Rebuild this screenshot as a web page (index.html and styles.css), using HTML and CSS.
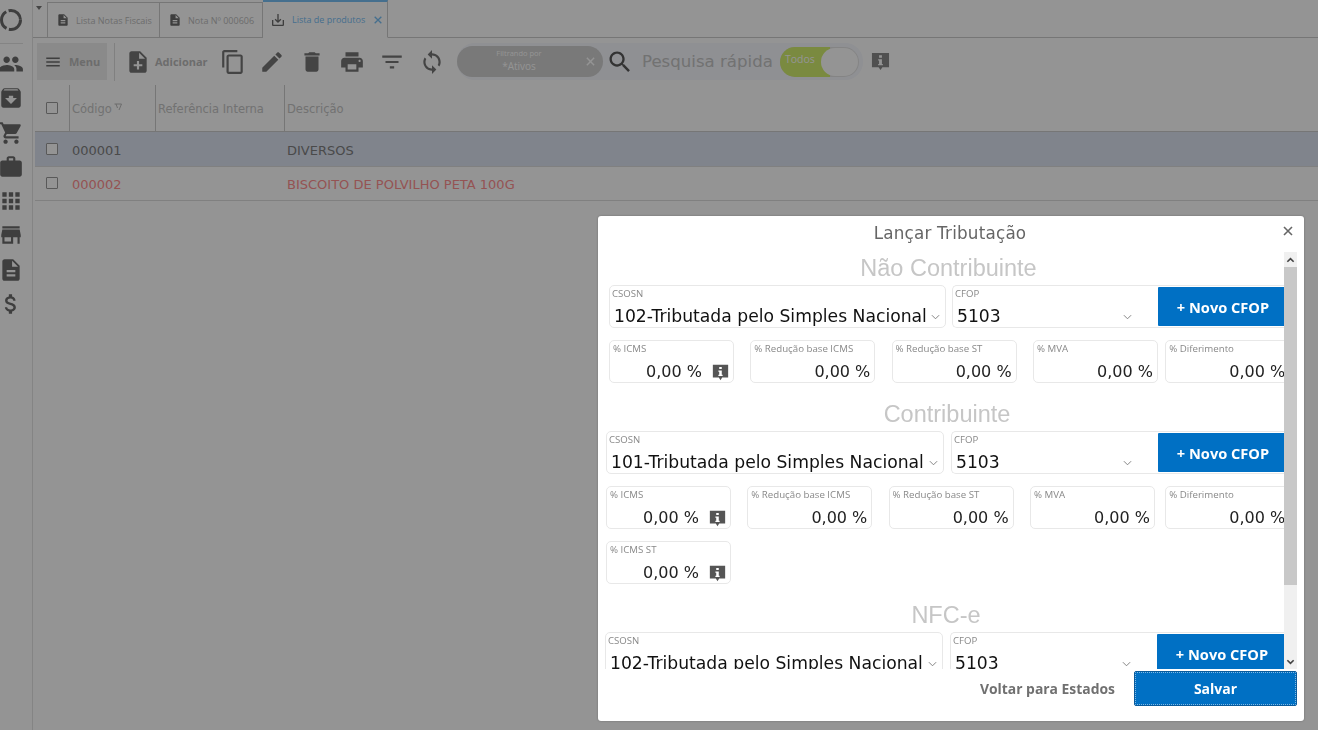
FILE: index.html
```html
<!DOCTYPE html>
<html lang="pt-BR">
<head>
    <meta charset="UTF-8">
    <title>Lista de produtos</title>
    <link rel="stylesheet" href="styles.css">
</head>
<body>
    <svg class="defs" width="0" height="0">
        <symbol id="i-people" viewBox="0 0 24 24"><path d="M16 11c1.66 0 2.99-1.34 2.99-3S17.66 5 16 5c-1.66 0-3 1.34-3 3s1.34 3 3 3zm-8 0c1.66 0 2.99-1.34 2.99-3S9.66 5 8 5C6.34 5 5 6.34 5 8s1.34 3 3 3zm0 2c-2.33 0-7 1.17-7 3.5V19h14v-2.5c0-2.33-4.67-3.5-7-3.5zm8 0c-.29 0-.62.02-.97.05 1.16.84 1.97 1.97 1.97 3.45V19h6v-2.5c0-2.33-4.67-3.5-7-3.5z"/></symbol>
        <symbol id="i-archive" viewBox="0 0 24 24"><path d="M20.54 5.23l-1.39-1.68C18.88 3.21 18.47 3 18 3H6c-.47 0-.88.21-1.16.55L3.46 5.23C3.17 5.57 3 6.02 3 6.5V19c0 1.1.9 2 2 2h14c1.1 0 2-.9 2-2V6.5c0-.48-.17-.93-.46-1.27zM12 17.5L6.5 12H10v-2h4v2h3.5L12 17.5zM5.12 5l.81-1h12l.94 1H5.12z"/></symbol>
        <symbol id="i-cart" viewBox="0 0 24 24"><path d="M7 18c-1.1 0-1.99.9-1.99 2S5.9 22 7 22s2-.9 2-2-.9-2-2-2zM1 2v2h2l3.6 7.59-1.35 2.45c-.16.28-.25.61-.25.96 0 1.1.9 2 2 2h12v-2H7.42c-.14 0-.25-.11-.25-.25l.03-.12.9-1.63h7.45c.75 0 1.41-.41 1.75-1.03l3.58-6.49c.08-.14.12-.31.12-.48 0-.55-.45-1-1-1H5.21l-.94-2H1zm16 16c-1.1 0-1.99.9-1.99 2s.89 2 1.99 2 2-.9 2-2-.9-2-2-2z"/></symbol>
        <symbol id="i-work" viewBox="0 0 24 24"><path d="M20 6h-4V4c0-1.11-.89-2-2-2h-4c-1.11 0-2 .89-2 2v2H4c-1.11 0-1.99.89-1.99 2L2 19c0 1.11.89 2 2 2h16c1.11 0 2-.89 2-2V8c0-1.11-.89-2-2-2zm-6 0h-4V4h4v2z"/></symbol>
        <symbol id="i-apps" viewBox="0 0 24 24"><path d="M4 8h4V4H4v4zm6 12h4v-4h-4v4zm-6 0h4v-4H4v4zm0-6h4v-4H4v4zm6 0h4v-4h-4v4zm6-10v4h4V4h-4zm-6 4h4V4h-4v4zm6 6h4v-4h-4v4zm0 6h4v-4h-4v4z"/></symbol>
        <symbol id="i-store" viewBox="0 0 24 24"><path d="M20 4H4v2h16V4zm1 10v-2l-1-5H4l-1 5v2h1v6h10v-6h4v6h2v-6h1zm-9 4H6v-4h6v4z"/></symbol>
        <symbol id="i-doc" viewBox="0 0 24 24"><path d="M14 2H6c-1.1 0-1.99.9-1.99 2L4 20c0 1.1.89 2 1.99 2H18c1.1 0 2-.9 2-2V8l-6-6zm2 16H8v-2h8v2zm0-4H8v-2h8v2zm-3-5V3.5L18.5 9H13z"/></symbol>
        <symbol id="i-money" viewBox="0 0 24 24"><path d="M11.8 10.9c-2.27-.59-3-1.2-3-2.15 0-1.09 1.01-1.85 2.7-1.85 1.78 0 2.44.85 2.5 2.1h2.21c-.07-1.72-1.12-3.3-3.21-3.81V3h-3v2.16c-1.94.42-3.5 1.68-3.5 3.61 0 2.31 1.91 3.46 4.7 4.13 2.5.6 3 1.48 3 2.41 0 .69-.49 1.79-2.7 1.79-2.06 0-2.87-.92-2.98-2.1h-2.2c.12 2.19 1.76 3.42 3.68 3.83V21h3v-2.15c1.95-.37 3.5-1.5 3.5-3.55 0-2.84-2.43-3.81-4.7-4.4z"/></symbol>
        <symbol id="i-download" viewBox="0 0 24 24"><path d="M19 12v7H5v-7H3v7c0 1.1.9 2 2 2h14c1.1 0 2-.9 2-2v-7h-2zm-6 .67l2.59-2.58L17 11.5l-5 5-5-5 1.41-1.41L11 12.67V3h2z"/></symbol>
        <symbol id="i-add" viewBox="0 0 24 24"><path d="M14 2H6c-1.1 0-1.99.9-1.99 2L4 20c0 1.1.89 2 1.99 2H18c1.1 0 2-.9 2-2V8l-6-6zm2 14h-3v3h-2v-3H8v-2h3v-3h2v3h3v2zm-3-7V3.5L18.5 9H13z"/></symbol>
        <symbol id="i-copy" viewBox="0 0 24 24"><path d="M16 1H4c-1.1 0-2 .9-2 2v14h2V3h12V1zm3 4H8c-1.1 0-2 .9-2 2v14c0 1.1.9 2 2 2h11c1.1 0 2-.9 2-2V7c0-1.1-.9-2-2-2zm0 16H8V7h11v14z"/></symbol>
        <symbol id="i-edit" viewBox="0 0 24 24"><path d="M3 17.25V21h3.75L17.81 9.94l-3.75-3.75L3 17.25zM20.71 7.04c.39-.39.39-1.02 0-1.41l-2.34-2.34c-.39-.39-1.02-.39-1.41 0l-1.83 1.83 3.75 3.75 1.83-1.83z"/></symbol>
        <symbol id="i-delete" viewBox="0 0 24 24"><path d="M6 19c0 1.1.9 2 2 2h8c1.1 0 2-.9 2-2V7H6v12zM19 4h-3.5l-1-1h-5l-1 1H5v2h14V4z"/></symbol>
        <symbol id="i-print" viewBox="0 0 24 24"><path d="M19 8H5c-1.66 0-3 1.34-3 3v6h4v4h12v-4h4v-6c0-1.66-1.34-3-3-3zm-3 11H8v-5h8v5zm3-7c-.55 0-1-.45-1-1s.45-1 1-1 1 .45 1 1-.45 1-1 1zm-1-9H6v4h12V3z"/></symbol>
        <symbol id="i-filter" viewBox="0 0 24 24"><path d="M10 18h4v-2h-4v2zM3 6v2h18V6H3zm3 7h12v-2H6v2z"/></symbol>
        <symbol id="i-sync" viewBox="0 0 24 24"><path d="M12 4V1L8 5l4 4V6c3.31 0 6 2.69 6 6 0 1.01-.25 1.97-.7 2.8l1.46 1.46C19.54 15.03 20 13.57 20 12c0-4.42-3.58-8-8-8zm0 14c-3.31 0-6-2.69-6-6 0-1.01.25-1.97.7-2.8L5.24 7.74C4.46 8.97 4 10.43 4 12c0 4.42 3.58 8 8 8v3l4-4-4-4v3z"/></symbol>
        <symbol id="i-search" viewBox="0 0 24 24"><path d="M15.5 14h-.79l-.28-.27C15.41 12.59 16 11.11 16 9.5 16 5.91 13.09 3 9.5 3S3 5.91 3 9.5 5.91 16 9.5 16c1.61 0 3.09-.59 4.23-1.57l.27.28v.79l5 4.99L20.49 19l-4.99-5zm-6 0C7.01 14 5 11.99 5 9.5S7.01 5 9.5 5 14 7.01 14 9.5 11.99 14 9.5 14z"/></symbol>
        <symbol id="i-menu" viewBox="0 0 24 24"><path d="M3 18h18v-2H3v2zm0-5h18v-2H3v2zm0-7v2h18V6H3z"/></symbol>
        <symbol id="i-info" viewBox="0 0 20 20"><path fill-rule="evenodd" d="M1 1h18v15h-7l-2 3-2-3H1zM8.5 3.5v2.5h3V3.500zM7.500 7.500v1.500h1v3.500h-1V14h5v-1.500h-1V7.500z"/></symbol>
        <symbol id="i-close" viewBox="0 0 12 12"><path d="M2 2l8 8M10 2l-8 8" fill="none" stroke="currentColor" stroke-width="1.6"/></symbol>
        <symbol id="i-chevron" viewBox="0 0 10 6"><path d="M1 1l4 4 4-4" fill="none" stroke="currentColor" stroke-width="1"/></symbol>
        <symbol id="i-chevron-bold" viewBox="0 0 10 6"><path d="M1.500 1l3.500 3.500L8.500 1" fill="none" stroke="currentColor" stroke-width="1.800"/></symbol>
    </svg>

    <div class="app">
        <aside class="sidebar">
            <svg class="logo" viewBox="0 0 24 24"><circle cx="12" cy="12" r="9.500" fill="none" stroke="#6c6c6c" stroke-width="3" stroke-dasharray="17 2.500 20 2.500 17 1"/></svg>
            <div class="logo-line"></div>
            <svg class="side-icon"><use href="#i-people"/></svg>
            <svg class="side-icon"><use href="#i-archive"/></svg>
            <svg class="side-icon"><use href="#i-cart"/></svg>
            <svg class="side-icon"><use href="#i-work"/></svg>
            <svg class="side-icon"><use href="#i-apps"/></svg>
            <svg class="side-icon"><use href="#i-store"/></svg>
            <svg class="side-icon"><use href="#i-doc"/></svg>
            <svg class="side-icon"><use href="#i-money"/></svg>
        </aside>

        <main class="main">
            <div class="tabbar">
                <span class="tab-caret"></span>
                <div class="tab tab-one"><svg class="tab-icon"><use href="#i-doc"/></svg>Lista Notas Fiscais</div>
                <div class="tab tab-two"><svg class="tab-icon"><use href="#i-doc"/></svg>Nota Nº 000606</div>
                <div class="tab tab-active"><svg class="tab-icon"><use href="#i-download"/></svg>Lista de produtos<svg class="tab-close"><use href="#i-close"/></svg></div>
            </div>

            <div class="toolbar">
                <div class="menu-btn"><svg class="menu-icon"><use href="#i-menu"/></svg>Menu</div>
                <div class="tool-sep"></div>
                <div class="add-btn"><svg class="tool-icon"><use href="#i-add"/></svg>Adicionar</div>
                <svg class="tool-icon tool-first"><use href="#i-copy"/></svg>
                <svg class="tool-icon"><use href="#i-edit"/></svg>
                <svg class="tool-icon"><use href="#i-delete"/></svg>
                <svg class="tool-icon"><use href="#i-print"/></svg>
                <svg class="tool-icon"><use href="#i-filter"/></svg>
                <svg class="tool-icon"><use href="#i-sync"/></svg>
                <div class="search-group">
                    <div class="chip">
                        <span class="chip-small">Filtrando por</span>
                        <span class="chip-value">*Ativos</span>
                        <svg class="chip-close"><use href="#i-close"/></svg>
                    </div>
                    <svg class="search-icon"><use href="#i-search"/></svg>
                    <span class="search-text">Pesquisa rápida</span>
                    <div class="toggle"><span class="toggle-label">Todos</span><span class="toggle-knob"></span></div>
                </div>
                <svg class="toolbar-info"><use href="#i-info"/></svg>
            </div>

            <div class="grid-row grid-head">
                <div class="col-check"><span class="check"></span></div>
                <div class="col col-code">Código<svg class="sort-mark" viewBox="0 0 8 8"><path d="M.5 1h7L5 7M2 1l1.500 4" fill="none" stroke="#aaa" stroke-width=".8"/></svg></div>
                <div class="col col-ref">Referência Interna</div>
                <div class="col col-desc">Descrição</div>
            </div>
            <div class="grid-row grid-selected">
                <div class="col-check"><span class="check"></span></div>
                <div class="cell col-code">000001</div>
                <div class="cell col-ref"></div>
                <div class="cell col-desc">DIVERSOS</div>
            </div>
            <div class="grid-row grid-inactive">
                <div class="col-check"><span class="check"></span></div>
                <div class="cell col-code">000002</div>
                <div class="cell col-ref"></div>
                <div class="cell col-desc">BISCOITO DE POLVILHO PETA 100G</div>
            </div>
        </main>
    </div>

    <div class="overlay"></div>

    <div class="modal">
        <header class="modal-head">
            <span>Lançar Tributação</span>
            <svg class="modal-close"><use href="#i-close"/></svg>
        </header>

        <div class="modal-body">
            <div class="scroll">
                <div class="scroll-inner">
                    <section class="section section-a">
                        <h2>Não Contribuinte</h2>
                        <div class="select-row">
                            <div class="box csosn">
                                <label>CSOSN</label>
                                <div class="select-value">102-Tributada pelo Simples Nacional<svg class="chevron"><use href="#i-chevron"/></svg></div>
                            </div>
                            <div class="box cfop">
                                <div class="cfop-field">
                                    <label>CFOP</label>
                                    <div class="select-value">5103<svg class="chevron"><use href="#i-chevron"/></svg></div>
                                </div>
                                <button class="btn-cfop">+ Novo CFOP</button>
                            </div>
                        </div>
                        <div class="field-row">
                            <div class="box field"><label>% ICMS</label><div class="num has-info">0,00 %<svg class="info"><use href="#i-info"/></svg></div></div>
                            <div class="box field"><label>% Redução base ICMS</label><div class="num">0,00 %</div></div>
                            <div class="box field"><label>% Redução base ST</label><div class="num">0,00 %</div></div>
                            <div class="box field"><label>% MVA</label><div class="num">0,00 %</div></div>
                            <div class="box field field-last"><label>% Diferimento</label><div class="num">0,00 %</div></div>
                        </div>
                    </section>

                    <section class="section section-b">
                        <h2>Contribuinte</h2>
                        <div class="select-row">
                            <div class="box csosn">
                                <label>CSOSN</label>
                                <div class="select-value">101-Tributada pelo Simples Nacional<svg class="chevron"><use href="#i-chevron"/></svg></div>
                            </div>
                            <div class="box cfop">
                                <div class="cfop-field">
                                    <label>CFOP</label>
                                    <div class="select-value">5103<svg class="chevron"><use href="#i-chevron"/></svg></div>
                                </div>
                                <button class="btn-cfop">+ Novo CFOP</button>
                            </div>
                        </div>
                        <div class="field-row">
                            <div class="box field"><label>% ICMS</label><div class="num has-info">0,00 %<svg class="info"><use href="#i-info"/></svg></div></div>
                            <div class="box field"><label>% Redução base ICMS</label><div class="num">0,00 %</div></div>
                            <div class="box field"><label>% Redução base ST</label><div class="num">0,00 %</div></div>
                            <div class="box field"><label>% MVA</label><div class="num">0,00 %</div></div>
                            <div class="box field field-last"><label>% Diferimento</label><div class="num">0,00 %</div></div>
                        </div>
                        <div class="field-row">
                            <div class="box field"><label>% ICMS ST</label><div class="num has-info">0,00 %<svg class="info"><use href="#i-info"/></svg></div></div>
                        </div>
                    </section>

                    <section class="section section-c">
                        <h2>NFC-e</h2>
                        <div class="select-row">
                            <div class="box csosn">
                                <label>CSOSN</label>
                                <div class="select-value">102-Tributada pelo Simples Nacional<svg class="chevron"><use href="#i-chevron"/></svg></div>
                            </div>
                            <div class="box cfop">
                                <div class="cfop-field">
                                    <label>CFOP</label>
                                    <div class="select-value">5103<svg class="chevron"><use href="#i-chevron"/></svg></div>
                                </div>
                                <button class="btn-cfop">+ Novo CFOP</button>
                            </div>
                        </div>
                    </section>
                </div>
            </div>
            <div class="scrollbar">
                <span class="bar-btn"><svg class="bar-up"><use href="#i-chevron-bold"/></svg></span>
                <span class="bar-thumb"></span>
                <span class="bar-btn bar-end"><svg class="bar-down"><use href="#i-chevron-bold"/></svg></span>
            </div>
        </div>

        <footer class="modal-foot">
            <span class="link-back">Voltar para Estados</span>
            <button class="btn-save">Salvar</button>
        </footer>
    </div>
</body>
</html>
```
FILE: styles.css
```css
* {
    box-sizing: border-box;
}
body {
    margin: 0;
    height: 730px;
    overflow: hidden;
    background: #fff;
    font-family: "DejaVu Sans", sans-serif;
    color: #666;
}
.defs {
    position: absolute;
}
.app {
    display: flex;
    height: 730px;
}

/* sidebar */
.sidebar {
    width: 33px;
    flex: none;
    border-right: 1px solid #e4e4e4;
    display: flex;
    flex-direction: column;
    align-items: center;
    padding-right: 11px;
    padding-top: 8px;
    overflow: hidden;
}
.logo {
    width: 24px;
    height: 24px;
    flex: none;
}
.logo-line {
    width: 24px;
    height: 1px;
    background: #e4e4e4;
    margin: 11px 0 7px;
    flex: none;
}
.side-icon {
    width: 26px;
    height: 26px;
    flex: none;
    fill: #6c6c6c;
    margin-bottom: 8.300px;
}

/* tabs */
.main {
    flex: 1;
    min-width: 0;
}
.tabbar {
    height: 38px;
    display: flex;
    align-items: flex-end;
    border-bottom: 1px solid #ccc;
    padding-left: 14px;
    position: relative;
}
.tab-caret {
    position: absolute;
    left: 3px;
    top: 6px;
    border: 3px solid transparent;
    border-top: 4px solid #777;
}
.tab {
    height: 35px;
    display: flex;
    align-items: center;
    border: 1px solid #ccc;
    border-bottom: none;
    font-family: "Open Sans", sans-serif;
    font-size: 9px;
    color: #bbb;
    white-space: nowrap;
}
.tab-icon {
    width: 14px;
    height: 14px;
    fill: #6c6c6c;
    margin-right: 6px;
}
.tab-one {
    width: 113px;
    padding-left: 8px;
}
.tab-two {
    width: 103px;
    padding-left: 8px;
    border-left: none;
}
.tab-active {
    width: 125px;
    height: 38px;
    margin-bottom: -1px;
    padding-left: 7px;
    border-top: 2px solid #78c0f5;
    border-left: none;
    border-bottom: 1px solid #fff;
    background: #fff;
    color: #78c0f5;
}
.tab-active .tab-icon {
    width: 16px;
    height: 16px;
}
.tab-close {
    width: 10px;
    height: 10px;
    margin-left: 8px;
    color: #78c0f5;
}

/* toolbar */
.toolbar {
    height: 47px;
    display: flex;
    align-items: center;
    padding-left: 4px;
}
.menu-btn {
    width: 70px;
    height: 37px;
    display: flex;
    align-items: center;
    padding-left: 7px;
    background: #eee;
    font-family: "Open Sans", sans-serif;
    font-weight: 700;
    font-size: 11px;
    color: #bbb;
}
.menu-icon {
    width: 18px;
    height: 18px;
    fill: #6c6c6c;
    margin-right: 7px;
}
.tool-sep {
    width: 1px;
    height: 38px;
    background: #ddd;
    margin: 0 10px 0 7px;
}
.add-btn {
    display: flex;
    align-items: center;
    gap: 4px;
    font-family: "Open Sans", sans-serif;
    font-weight: 700;
    font-size: 11px;
    color: #bbb;
    width: 83px;
}
.tool-icon {
    width: 26px;
    height: 26px;
    fill: #757575;
    flex: none;
    margin-right: 14px;
}
.add-btn .tool-icon {
    margin-right: 0;
}
.tool-first {
    margin-left: 12px;
    margin-right: 13px;
}
.search-group {
    width: 406px;
    height: 37px;
    margin-left: -2px;
    display: flex;
    align-items: center;
    background: #f6f8fe;
    border-radius: 18px;
}
.chip {
    width: 146px;
    height: 31px;
    border-radius: 16px;
    background: #d0d0d0;
    color: #fff;
    font-family: "Open Sans", sans-serif;
    display: flex;
    flex-direction: column;
    align-items: center;
    justify-content: center;
    position: relative;
    padding-right: 22px;
}
.chip-small {
    font-size: 7.500px;
    line-height: 11px;
    margin-top: -2px;
}
.chip-value {
    font-size: 10px;
    line-height: 15px;
}
.chip-close {
    position: absolute;
    right: 7px;
    top: 10px;
    width: 11px;
    height: 11px;
    color: #fff;
}
.search-icon {
    width: 28px;
    height: 28px;
    fill: #585858;
    margin-left: 3px;
    flex: none;
}
.search-text {
    font-size: 16.600px;
    color: #c4c4c4;
    margin-left: 8px;
    white-space: nowrap;
    width: 138px;
}
.toggle {
    width: 79px;
    height: 30px;
    border-radius: 15px;
    background: #e4e4e4;
    display: flex;
    align-items: center;
    position: relative;
    overflow: hidden;
    flex: none;
}
.toggle-label {
    width: 50px;
    height: 30px;
    background: #d2ee6e;
    color: #fff;
    font-family: "Open Sans", sans-serif;
    font-size: 10.500px;
    padding: 5px 0 0 5px;
}
.toggle-knob {
    position: absolute;
    left: 41px;
    top: 1px;
    width: 37px;
    height: 28px;
    border-radius: 14px;
    background: #fff;
}
.toolbar-info {
    width: 19px;
    height: 19px;
    fill: #8a8a8a;
    margin-left: 8px;
    flex: none;
}

/* grid */
.grid-row {
    display: flex;
    align-items: center;
    margin-left: 2px;
    border-bottom: 1px solid #ddd;
    font-size: 13px;
}
.grid-head {
    height: 47px;
    border-bottom: 1px solid #ccc;
    font-size: 11.500px;
    color: #c4c4c4;
}
.grid-selected {
    height: 35px;
    background: #dce4f2;
    color: #808080;
}
.grid-inactive {
    height: 34px;
    color: #ff8f8f;
}
.grid-selected .cell, .grid-inactive .cell, .grid-head .col {
    padding-top: 2px;
}
.col-check {
    width: 34px;
    display: flex;
    justify-content: center;
    padding-bottom: 1px;
}
.check {
    width: 12px;
    height: 12px;
    border: 1px solid #999;
    background: #fff;
    border-radius: 1px;
}
.col, .cell {
    padding-left: 2px;
}
.cell {
    padding-left: 3px;
}
.col {
    height: 100%;
    display: flex;
    align-items: center;
    border-left: 1px solid #ccc;
}
.col-code {
    width: 86px;
}
.col-ref {
    width: 129px;
}
.col-desc {
    flex: 1;
}
.sort-mark {
    width: 8px;
    height: 8px;
    margin: -5px 0 0 2px;
}

/* dim layer over the app */
.overlay {
    position: fixed;
    inset: 0;
    background: rgba(0, 0, 0, .42);
}

/* modal */
.modal {
    position: absolute;
    left: 598px;
    top: 216px;
    width: 706px;
    height: 505px;
    display: flex;
    flex-direction: column;
    background: #fff;
    border-radius: 3px;
    box-shadow: 0 0 2px rgba(0, 0, 0, .3);
}
.modal-head {
    height: 34px;
    flex: none;
    display: flex;
    justify-content: center;
    align-items: center;
    position: relative;
    font-size: 16.800px;
    color: #666;
    letter-spacing: .2px;
    padding-right: 2px;
}
.modal-close {
    position: absolute;
    right: 10px;
    top: 9px;
    width: 12px;
    height: 12px;
    color: #666;
}
.modal-body {
    flex: 1;
    min-height: 0;
    display: flex;
    padding-right: 7px;
}
.scroll {
    width: 686px;
    overflow: hidden;
}
.scroll-inner {
    width: 692px;
}
.section {
    padding-bottom: 1px;
    margin-bottom: 12px;
}
.section-a {
    padding-left: 11px;
}
.section-b {
    padding-left: 8px;
}
.section-c {
    padding-left: 7px;
    padding-right: 1px;
}
.section h2 {
    margin: 0;
    height: 35px;
    line-height: 37px;
    text-align: center;
    padding-right: 2px;
    font-family: "Liberation Sans", sans-serif;
    font-weight: 400;
    font-size: 23.500px;
    color: #c6c6c6;
}
.box {
    border: 1px solid #e8e8e8;
    border-radius: 5px;
    background: #fff;
}
label {
    display: block;
    font-family: "Open Sans", sans-serif;
    font-size: 9.600px;
    line-height: 12px;
    color: #888;
}
.select-row {
    display: flex;
    gap: 7px;
    height: 43px;
}
.section-a .select-row {
    gap: 6px;
}
.csosn {
    width: 338px;
    flex: none;
    padding: 2px 0 0 2px;
}
.section-a .csosn {
    width: 337px;
}
.cfop {
    flex: 1;
    display: flex;
    align-items: center;
    border-right: none;
    border-radius: 5px 0 0 5px;
}
.cfop-field {
    flex: 1;
    align-self: stretch;
    padding: 2px 0 0 2px;
}
.select-value {
    position: relative;
    padding-left: 2px;
    margin-top: 5px;
    font-size: 17.200px;
    line-height: 22px;
    color: #111;
    white-space: nowrap;
}
.chevron {
    position: absolute;
    right: 5px;
    top: 9px;
    width: 9px;
    height: 6px;
    color: #777;
}
.cfop .chevron {
    right: 26px;
}
.btn-cfop {
    width: 130px;
    height: 39px;
    flex: none;
    margin-right: 2px;
    border: none;
    padding: 0;
    background: #0070c4;
    color: #fff;
    font-family: "Open Sans", sans-serif;
    font-weight: 700;
    font-size: 14.600px;
    border-radius: 1px;
}
.field-row {
    display: flex;
    gap: 16.300px;
    margin-top: 12px;
}
.field {
    width: 125px;
    height: 43px;
    flex: none;
    padding: 2px 4px 0 3px;
}
.section-a .field-last {
    margin-left: -9px;
}
.section-b .field-last {
    margin-left: -6px;
}
.field label {
    font-size: 9.700px;
    white-space: nowrap;
}
.num {
    font-size: 16px;
    line-height: 22px;
    margin-top: 6px;
    color: #222;
    text-align: right;
    white-space: nowrap;
}
.has-info {
    display: flex;
    justify-content: flex-end;
    align-items: center;
}
.info {
    width: 17px;
    height: 17px;
    fill: #555;
    margin-left: 10px;
}

/* scrollbar */
.scrollbar {
    width: 13px;
    margin-top: 2px;
    background: #f0f0f0;
    display: flex;
    flex-direction: column;
}
.bar-btn {
    height: 15px;
    flex: none;
    display: flex;
    justify-content: center;
    align-items: center;
}
.bar-thumb {
    height: 318px;
    background: #c8c8c8;
    flex: none;
}
.bar-end {
    margin-top: auto;
}
.bar-up, .bar-down {
    width: 9px;
    height: 6px;
    color: #444;
}
.bar-up {
    transform: rotate(180deg);
}

/* footer */
.modal-foot {
    height: 52px;
    flex: none;
    display: flex;
    justify-content: flex-end;
    align-items: flex-start;
    padding: 2px 7px 0 0;
    gap: 19px;
}
.link-back {
    font-family: "Open Sans", sans-serif;
    font-weight: 700;
    font-size: 13.900px;
    line-height: 35px;
    color: #707070;
}
.btn-save {
    width: 163px;
    height: 35px;
    background: #0070c4;
    border: 1px solid #0a5a9a;
    outline: 1px dotted rgba(255, 255, 255, .5);
    outline-offset: -2px;
    border-radius: 2px;
    color: #fff;
    font-family: "Open Sans", sans-serif;
    font-weight: 700;
    font-size: 14px;
}
```
